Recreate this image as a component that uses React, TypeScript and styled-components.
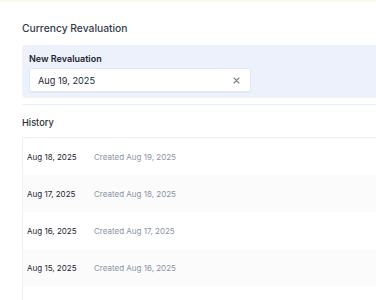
import styled, { createGlobalStyle } from 'styled-components';

const GlobalStyle = createGlobalStyle`
  html, body { margin: 0; padding: 0; background: #ffffff; }
  body { font-family: Inter, "Noto Sans", sans-serif; color: #1f2937; }
`;

const history = [
  { date: 'Aug 18, 2025', created: 'Aug 19, 2025' },
  { date: 'Aug 17, 2025', created: 'Aug 18, 2025' },
  { date: 'Aug 16, 2025', created: 'Aug 17, 2025' },
  { date: 'Aug 15, 2025', created: 'Aug 16, 2025' },
  { date: '', created: '' },
];

const App = () => (
  <>
    <GlobalStyle />
    <Page>
      <TopStrip />
      <Content>
        <Title>Currency Revaluation</Title>
        <NewPanel>
          <PanelLabel>New Revaluation</PanelLabel>
          <DateInput>
            <span>Aug 19, 2025</span>
            <ClearButton aria-label="Clear">
              <svg width="7" height="7" viewBox="0 0 7 7">
                <path d="M1 1 L6 6 M6 1 L1 6" stroke="#7b8494" strokeWidth="1.1" strokeLinecap="round" />
              </svg>
            </ClearButton>
          </DateInput>
        </NewPanel>
        <HistorySection>
          <SectionTitle>History</SectionTitle>
          <Table>
            {history.map((row, i) => (
              <Row key={i} $striped={i % 2 === 1}>
                <RowDate>{row.date}</RowDate>
                {row.created && <RowMeta>Created {row.created}</RowMeta>}
              </Row>
            ))}
          </Table>
        </HistorySection>
      </Content>
    </Page>
  </>
);

const Page = styled.div`
  width: 376px;
  height: 300px;
  overflow: hidden;
`;

const TopStrip = styled.div`
  height: 2px;
  background: #f6fae6;
`;

const Content = styled.div`
  padding: 18px 0 0 22px;
`;

const Title = styled.h2`
  margin: 0;
  font-size: 10.3px;
  font-weight: 500;
  color: #333b48;
  line-height: 16px;
`;

const NewPanel = styled.div`
  margin-top: 9px;
  width: 380px;
  height: 53px;
  box-sizing: border-box;
  background: #edf1fc;
  border-radius: 4px;
  padding: 7px 0 0 7px;
`;

const PanelLabel = styled.div`
  font-size: 9px;
  font-weight: 600;
  color: #1e2530;
  line-height: 13px;
`;

const DateInput = styled.div`
  margin-top: 3px;
  width: 222px;
  height: 24px;
  box-sizing: border-box;
  background: #ffffff;
  border: 1px solid #e4e8f1;
  border-radius: 3px;
  box-shadow: 0 1px 1px rgba(30, 40, 60, 0.05);
  display: flex;
  align-items: center;
  justify-content: space-between;
  padding: 0 10px 0 8px;
  font-size: 9.2px;
  color: #222a36;
`;

const ClearButton = styled.span`
  display: flex;
  align-items: center;
`;

const HistorySection = styled.div`
  margin-top: 6px;
  border-top: 1px solid #eceff6;
  padding-top: 11px;
`;

const SectionTitle = styled.div`
  font-size: 9.2px;
  font-weight: 500;
  color: #28303c;
  line-height: 13px;
`;

const Table = styled.div`
  margin-top: 8px;
  border-top: 1px solid #eceff6;
  border-left: 1px solid #eceff6;
`;

const Row = styled.div<{ $striped: boolean }>`
  height: 37px;
  display: flex;
  align-items: center;
  padding-left: 4px;
  background: ${(p) => (p.$striped ? '#fbfbfc' : '#ffffff')};
`;

const RowDate = styled.span`
  width: 67px;
  font-size: 8px;
  color: #1f2530;
`;

const RowMeta = styled.span`
  font-size: 8px;
  color: #8a93a3;
`;

export default App;
